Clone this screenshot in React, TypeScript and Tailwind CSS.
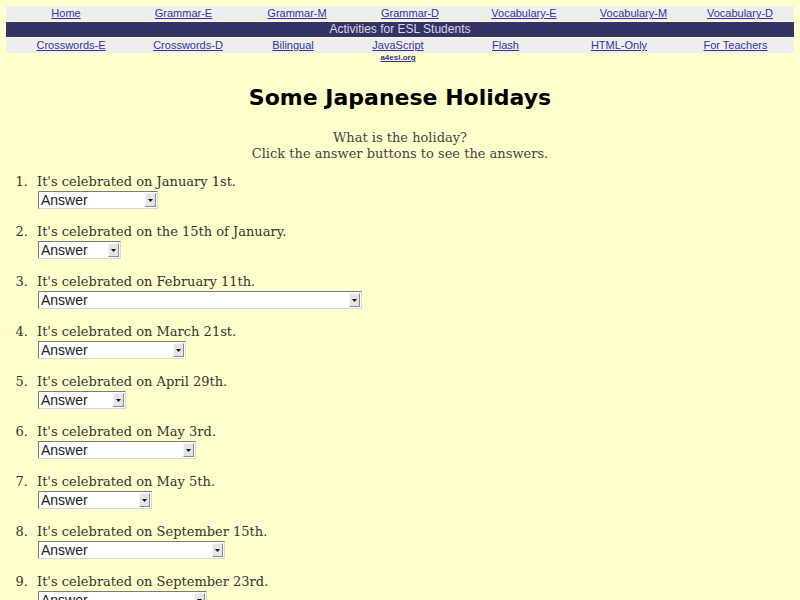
import React from "react";

const row1 = ["Home", "Grammar-E", "Grammar-M", "Grammar-D", "Vocabulary-E", "Vocabulary-M", "Vocabulary-D"];
const row3 = ["Crosswords-E", "Crosswords-D", "Bilingual", "JavaScript", "Flash", "HTML-Only", "For Teachers"];

const items: { q: string; w: number }[] = [
  { q: "It's celebrated on January 1st.", w: 120 },
  { q: "It's celebrated on the 15th of January.", w: 83 },
  { q: "It's celebrated on February 11th.", w: 324 },
  { q: "It's celebrated on March 21st.", w: 148 },
  { q: "It's celebrated on April 29th.", w: 88 },
  { q: "It's celebrated on May 3rd.", w: 158 },
  { q: "It's celebrated on May 5th.", w: 114 },
  { q: "It's celebrated on September 15th.", w: 187 },
  { q: "It's celebrated on September 23rd.", w: 169 },
];

function FakeSelect({ w }: { w: number }) {
  return (
    <div
      className="flex h-[18px] items-stretch border border-t-[#7a7a7a] border-l-[#7a7a7a] border-r-[#d8d8d8] border-b-[#d8d8d8] bg-white"
      style={{ width: w }}
    >
      <div className="flex-1 pl-[2px] text-[14px] leading-[16px] text-[#222]" style={{ fontFamily: "'Liberation Sans', Arial, sans-serif" }}>
        Answer
      </div>
      <div className="my-[1px] mr-[1px] flex w-[11px] items-center justify-center border border-t-[#f4f4f4] border-l-[#f4f4f4] border-r-[#8a8a8a] border-b-[#8a8a8a] bg-[#e4e4e4]">
        <svg width="5" height="3" viewBox="0 0 5 3">
          <path d="M0 0 H5 L2.5 3 Z" fill="#111" />
        </svg>
      </div>
    </div>
  );
}

export default function App() {
  const nav = { fontFamily: "'Liberation Sans', Arial, sans-serif" };
  const serif = { fontFamily: "'DejaVu Serif', Georgia, serif" };
  return (
    <div className="min-h-screen bg-[#ffffcc] pt-[6px]">
      <div className="mx-[6px]" style={nav}>
        <div className="grid h-[15px] grid-cols-[120px_115px_112px_114px_114px_105px_108px] bg-[#eeeeee] text-[11px] leading-[15px]">
          {row1.map((t) => (
            <div key={t} className="text-center">
              <a className="text-[#33339a] underline">{t}</a>
            </div>
          ))}
        </div>
        <div className="mt-[1px] h-[15px] bg-[#333366] text-center text-[12px] leading-[15px] text-[#d8d8e8]">
          Activities for ESL Students
        </div>
        <div className="mt-[1px] grid h-[15px] grid-cols-[130px_104px_106px_104px_111px_116px_117px] bg-[#eeeeee] text-[11px] leading-[15px]">
          {row3.map((t) => (
            <div key={t} className="text-center">
              <a className="text-[#33339a] underline">{t}</a>
            </div>
          ))}
        </div>
        <div className="grid grid-cols-[130px_104px_106px_104px_111px_116px_117px] text-[8px] font-bold leading-[9px]">
          <div />
          <div />
          <div />
          <div className="text-center">
            <a className="text-[#33339a] underline">a4esl.org</a>
          </div>
        </div>
      </div>

      <h1
        className="mt-[21px] text-center text-[22px] font-bold leading-[30px] text-[#000]"
        style={{ fontFamily: "'DejaVu Sans', sans-serif" }}
      >
        Some Japanese Holidays
      </h1>

      <div className="mt-[17px] text-center text-[13px] leading-[16px] text-[#444]" style={serif}>
        <div>What is the holiday?</div>
        <div>Click the answer buttons to see the answers.</div>
      </div>

      <div className="mt-[11px] flex flex-col gap-[14px] text-[13px] text-[#333]" style={serif}>
        {items.map((it, i) => (
          <div key={i} className="flex">
            <div className="w-[31px] pr-[3px] text-right leading-[18px]">{i + 1}.</div>
            <div className="pl-[6px] pt-0">
              <div className="leading-[18px]">{it.q}</div>
              <div className="pl-[1px]">
                <FakeSelect w={it.w} />
              </div>
            </div>
          </div>
        ))}
      </div>
    </div>
  );
}
